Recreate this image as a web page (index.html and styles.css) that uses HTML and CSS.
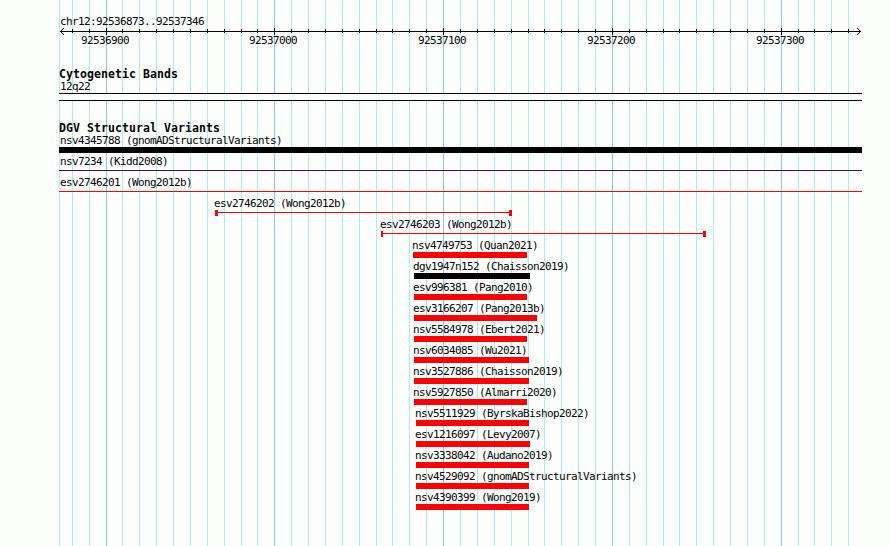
FILE: index.html
```html
<!DOCTYPE html>
<html lang="en">
<head>
  <meta charset="UTF-8" />
  <title>chr12:92536873..92537346</title>
  <link rel="stylesheet" href="styles.css">
</head>
<body>
  <div class="browser">
    <!-- grid lines, every 10 bp -->
    <svg class="grid" width="890" height="546" shape-rendering="crispEdges">
      <path class="minor" d="M59.5 0V546M72.5 0V546M89.5 0V546M122.5 0V546M139.5 0V546M156.5 0V546M173.5 0V546M190.5 0V546M207.5 0V546M224.5 0V546M241.5 0V546M257.5 0V546M291.5 0V546M308.5 0V546M325.5 0V546M342.5 0V546M359.5 0V546M376.5 0V546M392.5 0V546M409.5 0V546M426.5 0V546M460.5 0V546M477.5 0V546M494.5 0V546M511.5 0V546M528.5 0V546M544.5 0V546M561.5 0V546M578.5 0V546M595.5 0V546M629.5 0V546M646.5 0V546M663.5 0V546M679.5 0V546M696.5 0V546M713.5 0V546M730.5 0V546M747.5 0V546M764.5 0V546M798.5 0V546M814.5 0V546M831.5 0V546M848.5 0V546" />
      <path class="major" d="M106.5 0V546M274.5 0V546M443.5 0V546M612.5 0V546M781.5 0V546" />
    </svg>

    <div class="tracks">
      <div class="ruler">
        <div class="label">chr12:92536873..92537346</div>
        <svg class="axis" width="803" height="8" viewBox="59 28 803 8" shape-rendering="crispEdges">
          <path d="M60 31.5H861" />
          <path d="M72.5 29v4M89.5 29v4M122.5 29v4M139.5 29v4M156.5 29v4M173.5 29v4M190.5 29v4M207.5 29v4M224.5 29v4M241.5 29v4M257.5 29v4M291.5 29v4M308.5 29v4M325.5 29v4M342.5 29v4M359.5 29v4M376.5 29v4M392.5 29v4M409.5 29v4M426.5 29v4M460.5 29v4M477.5 29v4M494.5 29v4M511.5 29v4M528.5 29v4M544.5 29v4M561.5 29v4M578.5 29v4M595.5 29v4M629.5 29v4M646.5 29v4M663.5 29v4M679.5 29v4M696.5 29v4M713.5 29v4M730.5 29v4M747.5 29v4M764.5 29v4M798.5 29v4M814.5 29v4M831.5 29v4M848.5 29v4" />
          <path d="M106.5 28v7M274.5 28v7M443.5 28v7M612.5 28v7M781.5 28v7" />
          <path d="M61 30.5h1M62 29.5h1M63 28.5h1M61 32.5h1M62 33.5h1M63 34.5h1M859 30.5h1M858 29.5h1M857 28.5h1M859 32.5h1M858 33.5h1M857 34.5h1" />
        </svg>
        <div class="ticks">
          <span>92536900</span>
          <span>92537000</span>
          <span>92537100</span>
          <span>92537200</span>
          <span>92537300</span>
        </div>
      </div>

      <div class="cytobands">
        <h2>Cytogenetic Bands</h2>
        <div class="label">12q22</div>
        <div class="band"></div>
      </div>

      <div class="variants">
        <h2>DGV Structural Variants</h2>
        <div class="feature full"><div class="label">nsv4345788 (gnomADStructuralVariants)</div><div class="bar black"></div></div>
        <div class="feature full"><div class="label">nsv7234 (Kidd2008)</div><div class="line purple"></div></div>
        <div class="feature full"><div class="label">esv2746201 (Wong2012b)</div><div class="line"></div></div>
        <div class="feature" style="margin-left: 156px"><div class="label">esv2746202 (Wong2012b)</div><div class="line range" style="width: 297px"></div></div>
        <div class="feature" style="margin-left: 322px"><div class="label">esv2746203 (Wong2012b)</div><div class="line range short" style="width: 325px"></div></div>
        <div class="feature" style="margin-left: 354px"><div class="label">nsv4749753 (Quan2021)</div><div class="bar" style="width: 114px"></div></div>
        <div class="feature" style="margin-left: 355px"><div class="label">dgv1947n152 (Chaisson2019)</div><div class="bar black" style="width: 116px"></div></div>
        <div class="feature" style="margin-left: 355px"><div class="label">esv996381 (Pang2010)</div><div class="bar" style="width: 113px"></div></div>
        <div class="feature" style="margin-left: 355px"><div class="label">esv3166207 (Pang2013b)</div><div class="bar" style="width: 123px"></div></div>
        <div class="feature" style="margin-left: 355px"><div class="label">nsv5584978 (Ebert2021)</div><div class="bar" style="width: 113px"></div></div>
        <div class="feature" style="margin-left: 355px"><div class="label">nsv6034085 (Wu2021)</div><div class="bar" style="width: 115px"></div></div>
        <div class="feature" style="margin-left: 355px"><div class="label">nsv3527886 (Chaisson2019)</div><div class="bar" style="width: 115px"></div></div>
        <div class="feature" style="margin-left: 355px"><div class="label">nsv5927850 (Almarri2020)</div><div class="bar" style="width: 113px"></div></div>
        <div class="feature" style="margin-left: 357px"><div class="label">nsv5511929 (ByrskaBishop2022)</div><div class="bar" style="width: 113px"></div></div>
        <div class="feature" style="margin-left: 357px"><div class="label">esv1216097 (Levy2007)</div><div class="bar" style="width: 114px"></div></div>
        <div class="feature" style="margin-left: 357px"><div class="label">nsv3338042 (Audano2019)</div><div class="bar" style="width: 113px"></div></div>
        <div class="feature" style="margin-left: 357px"><div class="label">nsv4529092 (gnomADStructuralVariants)</div><div class="bar" style="width: 113px"></div></div>
        <div class="feature" style="margin-left: 357px"><div class="label">nsv4390399 (Wong2019)</div><div class="bar" style="width: 113px"></div></div>
      </div>
    </div>
  </div>
</body>
</html>
```
FILE: styles.css
```css
body {
  margin: 0;
  background: #fcfefc;
  color: #040204;
  font-family: "DejaVu Sans Mono", monospace;
  font-size: 11px;
  line-height: 13px;
  letter-spacing: -0.622px;
  white-space: nowrap;
}

.browser {
  position: relative;
  width: 890px;
  height: 546px;
  overflow: hidden;
}

/* grid lies behind all tracks */
.grid {
  position: absolute;
  top: 0;
  left: 0;
}

.grid path {
  fill: none;
  stroke: #aceeec;
}

.grid .major {
  stroke: #84caec;
}

.tracks {
  position: relative;
  width: 803px;
  padding: 15px 0 0 59px;
}

h2 {
  margin: 0;
  height: 12px;
  font-size: 11.5px;
  line-height: 12px;
  letter-spacing: 0.077px;
}

.label {
  height: 13px;
  padding-left: 1px;
}

.ruler {
  height: 53px;
}

.axis {
  display: block;
}

.axis path {
  fill: none;
  stroke: #040204;
}

.ticks {
  display: grid;
  grid-template-columns: 168px 169px 169px 169px 60px;
  margin-top: -2px;
  padding-left: 22px;
}

.cytobands {
  height: 54px;
}

.band {
  height: 6px;
  background: #fcfefc;
  border-top: 1px solid #040204;
  border-bottom: 1px solid #040204;
}

.feature {
  height: 21px;
}

.feature .label {
  margin-left: -2px;
}

.feature.full .label {
  margin-left: 0;
}

.bar {
  height: 6px;
  background: #fc0204;
}

.line {
  display: flex;
  justify-content: space-between;
  height: 6px;
  background: linear-gradient(#fc0204, #fc0204) 0 2px / 100% 1px no-repeat;
}

.black {
  background: #040204;
}

.purple {
  background-image: linear-gradient(#4c0284, #4c0284);
}

.range::before,
.range::after {
  content: "";
  width: 3px;
  background: #fc0204;
}

.short::before {
  width: 2px;
}
```
